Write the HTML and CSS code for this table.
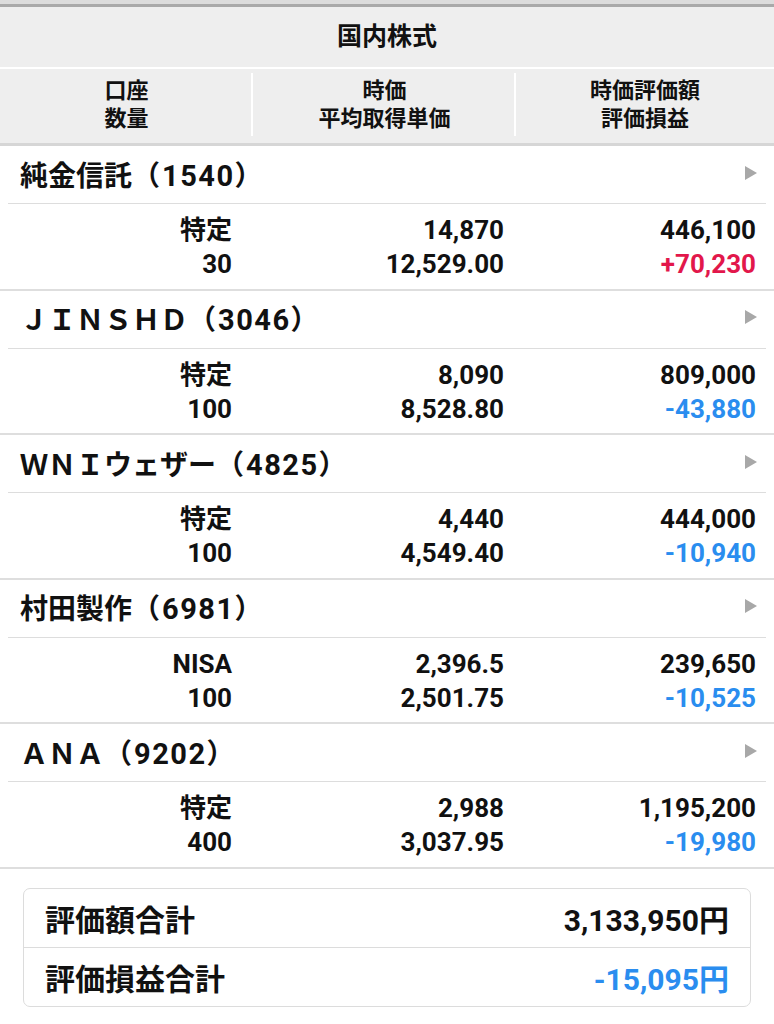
FILE: index.html
```html
<!DOCTYPE html>
<html lang="ja">
<head>
<meta charset="utf-8">
<title>国内株式</title>
<link rel="stylesheet" href="styles.css">
</head>
<body>
<div class="top-bar"></div>
<header class="title">国内株式</header>
<div class="colhead">
  <div class="ch">口座<br>数量</div>
  <div class="ch ch-div">時価<br>平均取得単価</div>
  <div class="ch ch-div">時価評価額<br>評価損益</div>
</div>

<section class="stock">
  <div class="name-row"><span class="name">純金信託（<span class="code">1540</span>）</span><span class="arrow"></span></div>
  <div class="data">
    <span>特定</span><span>14,870</span><span>446,100</span>
    <span>30</span><span>12,529.00</span><span class="plus">+70,230</span>
  </div>
</section>

<section class="stock">
  <div class="name-row"><span class="name">ＪＩＮＳＨＤ（<span class="code">3046</span>）</span><span class="arrow"></span></div>
  <div class="data">
    <span>特定</span><span>8,090</span><span>809,000</span>
    <span>100</span><span>8,528.80</span><span class="minus">-43,880</span>
  </div>
</section>

<section class="stock">
  <div class="name-row"><span class="name">ＷＮＩウェザー（<span class="code">4825</span>）</span><span class="arrow"></span></div>
  <div class="data">
    <span>特定</span><span>4,440</span><span>444,000</span>
    <span>100</span><span>4,549.40</span><span class="minus">-10,940</span>
  </div>
</section>

<section class="stock">
  <div class="name-row"><span class="name">村田製作（<span class="code">6981</span>）</span><span class="arrow"></span></div>
  <div class="data">
    <span>NISA</span><span>2,396.5</span><span>239,650</span>
    <span>100</span><span>2,501.75</span><span class="minus">-10,525</span>
  </div>
</section>

<section class="stock">
  <div class="name-row"><span class="name">ＡＮＡ（<span class="code">9202</span>）</span><span class="arrow"></span></div>
  <div class="data">
    <span>特定</span><span>2,988</span><span>1,195,200</span>
    <span>400</span><span>3,037.95</span><span class="minus">-19,980</span>
  </div>
</section>

<div class="summary">
  <div class="sum-row"><span>評価額合計</span><span>3,133,950円</span></div>
  <div class="sum-row"><span>評価損益合計</span><span class="minus">-15,095円</span></div>
</div>
</body>
</html>
```

FILE: styles.css
```css
html, body {
  margin: 0;
  padding: 0;
  background: #ffffff;
}
body {
  width: 774px;
  font-family: Roboto, "Noto Sans CJK JP", sans-serif;
  font-weight: bold;
  color: #111111;
}
.top-bar {
  height: 4px;
  background: #dcdcdc;
  border-bottom: 3px solid #a9a9a9;
}
.title {
  height: 60px;
  line-height: 60px;
  text-align: center;
  font-size: 25px;
  background: #eeeeee;
  border-bottom: 2px solid #ffffff;
}
.colhead {
  display: grid;
  grid-template-columns: 253px 263px 1fr;
  background: #eeeeee;
  padding: 4px 0 7px;
  border-bottom: 3px solid #d6d6d6;
}
.ch {
  text-align: center;
  font-size: 22px;
  line-height: 28px;
  padding: 3.5px 0;
}
.ch-div {
  border-left: 2px solid #ffffff;
  margin-left: -2px;
}
.stock {
  border-bottom: 2px solid #dedede;
}
.name-row {
  height: 58px;
  display: flex;
  align-items: center;
  justify-content: space-between;
  box-sizing: border-box;
  border-bottom: 1px solid #dddddd;
  margin: 0 8px;
  padding: 0 9px 2px 12px;
}
.name {
  font-size: 28px;
}
.code {
  font-size: 29px;
  letter-spacing: 1.5px;
  padding-left: 2px;
}
.arrow {
  width: 0;
  height: 0;
  border-left: 12px solid #a8a8a8;
  border-top: 7px solid transparent;
  border-bottom: 7px solid transparent;
  margin-top: -2px;
}
.data {
  height: 84.6px;
  box-sizing: border-box;
  padding: 9px 18px 0 0;
  display: grid;
  grid-template-columns: 232px 272px 1fr;
  align-content: start;
  font-size: 26px;
  line-height: 34px;
  text-align: right;
}
.plus {
  color: #e2174b;
}
.minus {
  color: #2a8def;
}
.summary {
  margin: 19px 23px 0 23px;
  border: 1px solid #dcdcdc;
  border-radius: 7px;
}
.sum-row {
  height: 58px;
  display: flex;
  align-items: center;
  justify-content: space-between;
  padding: 0 21px;
  font-size: 30px;
}
.sum-row + .sum-row {
  border-top: 1px solid #dcdcdc;
}
```
